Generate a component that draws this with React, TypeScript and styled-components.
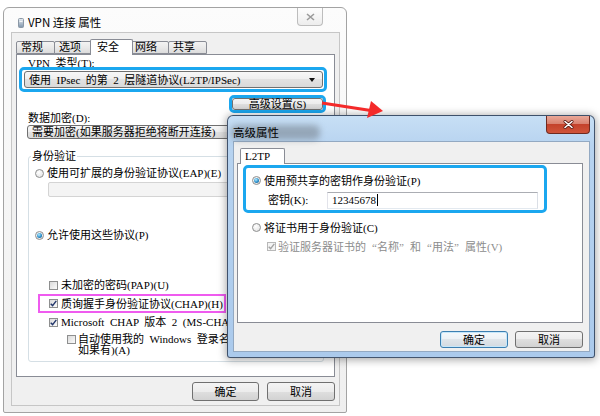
import React from 'react'
import styled, { createGlobalStyle } from 'styled-components'

const UI = `"Liberation Serif", "Noto Sans CJK SC", serif`
const SANS = `"Noto Sans CJK SC", "Noto Sans", sans-serif`

const GlobalStyle = createGlobalStyle`
  html, body { margin: 0; padding: 0; background: #ffffff; }
  #root { width: 600px; height: 416px; }
`

const Desktop = styled.div`
  position: relative;
  width: 600px;
  height: 416px;
  overflow: hidden;
  background: #ffffff;
  font-family: ${UI};
  font-size: 11px;
  line-height: 12px;
  word-spacing: 2.75px;
  color: #000;
`

/* ---------- main window chrome ---------- */

const MainWindow = styled.div`
  position: absolute;
  left: 3px;
  top: 7px;
  width: 344px;
  height: 406px;
  box-sizing: border-box;
  border: 1px solid #a3a3a3;
  border-radius: 6px 6px 2px 2px;
  background: linear-gradient(#fcfcfc, #efefef);
  padding: 0 6px 6px 7px;
  display: flex;
  flex-direction: column;
`

const MainTitleBar = styled.div`
  height: 24px;
  flex-shrink: 0;
  display: flex;
  align-items: flex-start;
`

const AppIcon = styled.svg`
  margin: 10px 4px 0 7px;
  flex-shrink: 0;
`

const MainTitle = styled.span`
  font-family: ${SANS};
  font-size: 11.5px;
  line-height: 14px;
  word-spacing: normal;
  margin-top: 7px;
`

const FadedClose = styled.div`
  margin-left: auto;
  margin-right: 17px;
  width: 26px;
  height: 18px;
  box-sizing: border-box;
  border: 1px solid #bdbdbd;
  border-top: none;
  border-radius: 0 0 4px 4px;
  background: linear-gradient(#fdfdfd, #ededed);
  display: flex;
  align-items: center;
  justify-content: center;
`

const Client = styled.div`
  flex: 1;
  background: #f0f0f0;
  border: 1px solid #c6c6c6;
  padding: 6px 4px 0 4px;
  display: flex;
  flex-direction: column;
`

/* ---------- tabs ---------- */

const TabStrip = styled.div<{ $indent?: number }>`
  display: flex;
  align-items: flex-end;
  height: 15px;
  padding-left: ${p => p.$indent ?? 0}px;
  flex-shrink: 0;
`

const Tab = styled.div<{ $active?: boolean; $padR?: number }>`
  position: relative;
  box-sizing: border-box;
  height: ${p => (p.$active ? 16 : 13)}px;
  margin: ${p => (p.$active ? '0 -3px -1px -2px' : '0 -1px 0 0')};
  padding: 0 ${p => p.$padR ?? 11}px 0 ${p => (p.$active ? 6 : 4)}px;
  border: 1px solid #898c95;
  border-bottom: ${p => (p.$active ? 'none' : '1px solid #898c95')};
  border-radius: 2px 2px 0 0;
  background: ${p => (p.$active ? '#ffffff' : 'linear-gradient(#f3f3f3, #e9e9e9 50%, #dcdcdc)')};
  line-height: ${p => (p.$active ? 14 : 11)}px;
  z-index: ${p => (p.$active ? 2 : 1)};
  white-space: nowrap;
`

const TabPanel = styled.div<{ $h: number }>`
  box-sizing: border-box;
  height: ${p => p.$h}px;
  flex-shrink: 0;
  background: #ffffff;
  border: 1px solid #898c95;
  display: flex;
  flex-direction: column;
`

/* ---------- controls ---------- */

const Label = styled.div<{ $top?: number; $left?: number }>`
  margin: ${p => p.$top ?? 0}px 0 0 ${p => p.$left ?? 0}px;
  height: 12px;
  white-space: nowrap;
`

const Highlight = styled.div<{ $w?: number; $top?: number; $left?: number }>`
  position: relative;
  z-index: 3;
  box-sizing: border-box;
  width: ${p => (p.$w ? `${p.$w}px` : 'auto')};
  margin: ${p => p.$top ?? 0}px 0 0 ${p => p.$left ?? 0}px;
  border: 3px solid #1ba7ef;
  border-radius: 5px;
`

const Combo = styled.div<{ $h: number }>`
  box-sizing: border-box;
  height: ${p => p.$h}px;
  border: 1px solid #707070;
  border-radius: 3px;
  background: linear-gradient(#f7f7f7, #eeeeee 50%, #e2e2e2 50%, #d9d9d9);
  display: flex;
  align-items: center;
  padding: 0 7px 0 4px;
  white-space: nowrap;
  overflow: hidden;
`

const ComboText = styled.span`
  flex: 1;
  overflow: hidden;
`

const Arrow = styled.span`
  width: 0;
  height: 0;
  border-left: 3.5px solid transparent;
  border-right: 3.5px solid transparent;
  border-top: 4px solid #111;
  flex-shrink: 0;
`

const DisabledCombo = styled.div`
  box-sizing: border-box;
  height: 15px;
  margin-left: 19px;
  border: 1px solid #d4d4d4;
  border-radius: 2px;
  background: #f4f4f4;
`

const Button = styled.div<{ $w: number; $h: number; $default?: boolean }>`
  box-sizing: border-box;
  width: ${p => p.$w}px;
  height: ${p => p.$h}px;
  border: 1px solid ${p => (p.$default ? '#3c7fb1' : '#707070')};
  border-radius: 3px;
  background: ${p =>
    p.$default
      ? 'linear-gradient(#f4f8fb, #ecf1f5 50%, #dfe5ea 50%, #d3dae0)'
      : 'linear-gradient(#f4f4f4, #ececec 50%, #dfdfdf 50%, #d2d2d2)'};
  box-shadow: ${p => (p.$default ? 'inset 0 0 0 1px #c6e7fa' : 'none')};
  display: flex;
  align-items: center;
  justify-content: center;
  white-space: nowrap;
`

const ButtonRow = styled.div<{ $top: number; $gap: number }>`
  display: flex;
  justify-content: flex-end;
  gap: ${p => p.$gap}px;
  margin-top: ${p => p.$top}px;
`

const Row = styled.div<{ $h: number; $top?: number; $left?: number; $gap?: number }>`
  display: flex;
  align-items: center;
  height: ${p => p.$h}px;
  margin: ${p => p.$top ?? 0}px 0 0 ${p => p.$left ?? 0}px;
  gap: ${p => p.$gap ?? 3}px;
  white-space: nowrap;
`

const RadioCircle = styled.span<{ $faded?: boolean }>`
  box-sizing: border-box;
  width: 9px;
  height: 9px;
  flex-shrink: 0;
  border-radius: 50%;
  border: 1px solid ${p => (p.$faded ? '#a8a8a8' : '#8e8f8f')};
  background: radial-gradient(circle at 40% 35%, #ffffff, #dedede);
  display: flex;
  align-items: center;
  justify-content: center;
`

const RadioDot = styled.span`
  width: 5px;
  height: 5px;
  border-radius: 50%;
  background: radial-gradient(circle at 40% 35%, #b6ecff, #2b8fcb 55%, #0d4d7c);
`

const CheckSquare = styled.span<{ $disabled?: boolean }>`
  box-sizing: border-box;
  width: 9px;
  height: 9px;
  flex-shrink: 0;
  border: 1px solid ${p => (p.$disabled ? '#b8b8b8' : '#8e8f8f')};
  background: ${p => (p.$disabled ? '#f4f4f4' : 'linear-gradient(135deg, #dadada, #fbfbfb)')};
  display: flex;
  align-items: center;
  justify-content: center;
`

const Text = styled.span<{ $gray?: boolean }>`
  color: ${p => (p.$gray ? '#8c8c8c' : '#000')};
`

const Q = styled.span<{ $open?: boolean }>`
  display: inline-block;
  width: 11px;
  text-align: ${p => (p.$open ? 'right' : 'left')};
`

const Radio = ({ checked, children }: { checked?: boolean; children: React.ReactNode }) => (
  <>
    <RadioCircle>{checked && <RadioDot />}</RadioCircle>
    <Text>{children}</Text>
  </>
)

const Check = ({ checked, disabled }: { checked?: boolean; disabled?: boolean }) => (
  <CheckSquare $disabled={disabled}>
    {checked && (
      <svg width="7" height="7" viewBox="0 0 7 7">
        <path d="M0.7 3.7 L2.6 5.6 L6.3 0.9" fill="none" stroke={disabled ? '#a3a3a3' : '#22366b'} strokeWidth="1.4" />
      </svg>
    )}
  </CheckSquare>
)

/* ---------- main window content ---------- */

const GroupBox = styled.fieldset`
  margin: 11px 10px 0 9px;
  padding: 0 0 5px 0;
  border: 1px solid #d5dfe5;
  border-radius: 3px;
  min-width: 0;
`

const Legend = styled.legend`
  padding: 0 1px;
  margin-left: 2px;
  line-height: 12px;
`

const ChapBox = styled.div`
  box-sizing: border-box;
  width: 188px;
  height: 19px;
  margin-left: 9px;
  border: 2px solid #ef5bef;
  display: flex;
  align-items: center;
  gap: 3px;
  padding-left: 9px;
  white-space: nowrap;
`

const TwoLine = styled.div`
  display: flex;
  align-items: flex-start;
  gap: 2px;
  margin: 3px 0 0 38px;
  white-space: nowrap;
  line-height: 11px;
`

const CheckHolder = styled.span`
  padding-top: 1px;
`

/* ---------- advanced dialog chrome ---------- */

const AdvWindow = styled.div`
  position: absolute;
  left: 227px;
  top: 115px;
  width: 368px;
  height: 243px;
  box-sizing: border-box;
  border: 1px solid rgba(35, 50, 75, 0.8);
  border-radius: 6px 6px 3px 3px;
  background: linear-gradient(#c7dff5, #b7d3f0 30px, #abcaec);
  box-shadow: 0 1px 9px 1px rgba(0, 0, 0, 0.35);
  padding: 0 4px 5px 5px;
  display: flex;
  flex-direction: column;
  z-index: 5;
`

const AdvTitleBar = styled.div`
  height: 25px;
  flex-shrink: 0;
  display: flex;
  align-items: flex-start;
`

const TitleGlow = styled.div`
  position: relative;
  box-sizing: border-box;
  width: 93px;
  height: 18px;
  margin: 7px 0 0 -3px;
  padding-left: 3px;
  font-family: ${SANS};
  font-size: 11.5px;
  line-height: 18px;
  word-spacing: normal;
  &::before {
    content: '';
    position: absolute;
    inset: 2px 3px 1px 1px;
    border-radius: 6px;
    background: rgba(115, 125, 137, 0.55);
    filter: blur(3px);
  }
  span {
    position: relative;
  }
`

const RedClose = styled.div`
  margin-left: auto;
  width: 44px;
  height: 18px;
  box-sizing: border-box;
  border: 1px solid #6f2a20;
  border-top: none;
  border-radius: 0 0 4px 4px;
  background: linear-gradient(#eaa898, #d98270 45%, #c4422b 50%, #d0543a);
  display: flex;
  align-items: center;
  justify-content: center;
`

const AdvClient = styled.div`
  flex: 1;
  background: #f0f0f0;
  border: 1px solid #93a9c2;
  padding: 6px 6px 0 3px;
  display: flex;
  flex-direction: column;
`

const KeyLabel = styled.span`
  width: 59px;
  margin-left: 22px;
  flex-shrink: 0;
`

const KeyInput = styled.div`
  box-sizing: border-box;
  width: 211px;
  height: 17px;
  border: 1px solid #abadb3;
  border-left-color: #e2e3ea;
  border-right-color: #dbdfe6;
  border-bottom-color: #e3e9ef;
  background: #ffffff;
  display: flex;
  align-items: center;
  padding-left: 4px;
`

const Caret = styled.span`
  width: 1px;
  height: 12px;
  background: #000;
  margin-left: 1px;
`

const ArrowMark = styled.svg`
  position: absolute;
  left: 318px;
  top: 98px;
  z-index: 6;
`

export default function App() {
  return (
    <Desktop>
      <GlobalStyle />

      <MainWindow>
        <MainTitleBar>
          <AppIcon width="6" height="10" viewBox="0 0 6 10">
            <defs>
              <linearGradient id="ic" x1="0" y1="0" x2="0" y2="1">
                <stop offset="0" stopColor="#e9eef3" />
                <stop offset="1" stopColor="#7d93aa" />
              </linearGradient>
            </defs>
            <rect x="0.5" y="0.5" width="5" height="9" rx="1" fill="url(#ic)" stroke="#8b98a6" />
            <rect x="1.5" y="3" width="3" height="1" fill="#ffffff" opacity="0.8" />
          </AppIcon>
          <MainTitle>VPN 连接 属性</MainTitle>
          <FadedClose>
            <svg width="9" height="8" viewBox="0 0 9 8">
              <path d="M1 1 L8 7 M8 1 L1 7" stroke="#9a9a9a" strokeWidth="1.6" />
            </svg>
          </FadedClose>
        </MainTitleBar>

        <Client>
          <TabStrip>
            <Tab>常规</Tab>
            <Tab>选项</Tab>
            <Tab $active $padR={13}>安全</Tab>
            <Tab>网络</Tab>
            <Tab>共享</Tab>
          </TabStrip>

          <TabPanel $h={323} style={{ paddingTop: 2, paddingLeft: 2 }}>
            <Label $left={9}>VPN 类型(T):</Label>
            <Highlight $top={-2} $w={308} style={{ padding: '1px 1px 1px 2px' }}>
              <Combo $h={17}>
                <ComboText>使用 IPsec 的第 2 层隧道协议(L2TP/IPSec)</ComboText>
                <Arrow />
              </Combo>
            </Highlight>

            <Highlight $top={3} $w={97} style={{ alignSelf: 'flex-end', marginRight: 8 }}>
              <Button $w={91} $h={12}>高级设置(S)</Button>
            </Highlight>

            <Label $top={-1} $left={9}>数据加密(D):</Label>
            <Combo $h={14} style={{ margin: '1px 10px 0 8px' }}>
              <ComboText>需要加密(如果服务器拒绝将断开连接)</ComboText>
              <Arrow />
            </Combo>

            <GroupBox>
              <Legend>身份验证</Legend>
              <Row $h={18} $top={2} $left={6}>
                <Radio>使用可扩展的身份验证协议(EAP)(E)</Radio>
              </Row>
              <DisabledCombo />
              <Row $h={18} $top={29} $left={6}>
                <Radio checked>允许使用这些协议(P)</Radio>
              </Row>
              <Row $h={18} $top={32} $left={20}>
                <Check />
                <Text>未加密的密码(PAP)(U)</Text>
              </Row>
              <ChapBox>
                <Check checked />
                <Text>质询握手身份验证协议(CHAP)(H)</Text>
              </ChapBox>
              <Row $h={18} $left={20}>
                <Check checked />
                <Text>Microsoft CHAP 版本 2 (MS-CHAP v2)(M)</Text>
              </Row>
              <TwoLine>
                <CheckHolder>
                  <Check />
                </CheckHolder>
                <Text>
                  自动使用我的 Windows 登录名称和密码(及域，
                  <br />
                  如果有)(A)
                </Text>
              </TwoLine>
            </GroupBox>
          </TabPanel>

          <ButtonRow $top={5} $gap={8}>
            <Button $w={67} $h={19}>确定</Button>
            <Button $w={68} $h={19}>取消</Button>
          </ButtonRow>
        </Client>
      </MainWindow>

      <ArrowMark width="70" height="24" viewBox="0 0 70 24">
        <line x1="4" y1="5" x2="56" y2="13" stroke="#f42a2a" strokeWidth="3" />
        <polygon points="53,3 65,13 49,20" fill="#f42a2a" />
      </ArrowMark>

      <AdvWindow>
        <AdvTitleBar>
          <TitleGlow>
            <span>高级属性</span>
          </TitleGlow>
          <RedClose>
            <svg width="11" height="9" viewBox="0 0 11 9">
              <path d="M2 1.5 L9 7.5 M9 1.5 L2 7.5" stroke="#5a1a12" strokeWidth="3" strokeLinecap="round" />
              <path d="M2 1.5 L9 7.5 M9 1.5 L2 7.5" stroke="#ffffff" strokeWidth="1.6" strokeLinecap="round" />
            </svg>
          </RedClose>
        </AdvTitleBar>

        <AdvClient>
          <TabStrip $indent={3}>
            <Tab $active $padR={14} style={{ margin: '0 0 -1px 0', paddingLeft: 4 }}>L2TP</Tab>
          </TabStrip>
          <TabPanel $h={160}>
            <Highlight $top={1} $left={5} $w={304} style={{ height: 48 }}>
              <Row $h={19} $top={3} $left={6}>
                <Radio checked>使用预共享的密钥作身份验证(P)</Radio>
              </Row>
              <Row $h={20} $gap={0}>
                <KeyLabel>密钥(K):</KeyLabel>
                <KeyInput>
                  <span>12345678</span>
                  <Caret />
                </KeyInput>
              </Row>
            </Highlight>
            <Row $h={19} $top={5} $left={14}>
              <Radio>将证书用于身份验证(C)</Radio>
            </Row>
            <Row $h={19} $left={29} $gap={2}>
              <Check checked disabled />
              <Text $gray>
                验证服务器证书的<Q $open>“</Q>名称<Q>”</Q>和<Q $open>“</Q>用法<Q>”</Q>属性(V)
              </Text>
            </Row>
          </TabPanel>
          <ButtonRow $top={8} $gap={7}>
            <Button $w={68} $h={17} $default>确定</Button>
            <Button $w={68} $h={17}>取消</Button>
          </ButtonRow>
        </AdvClient>
      </AdvWindow>
    </Desktop>
  )
}
